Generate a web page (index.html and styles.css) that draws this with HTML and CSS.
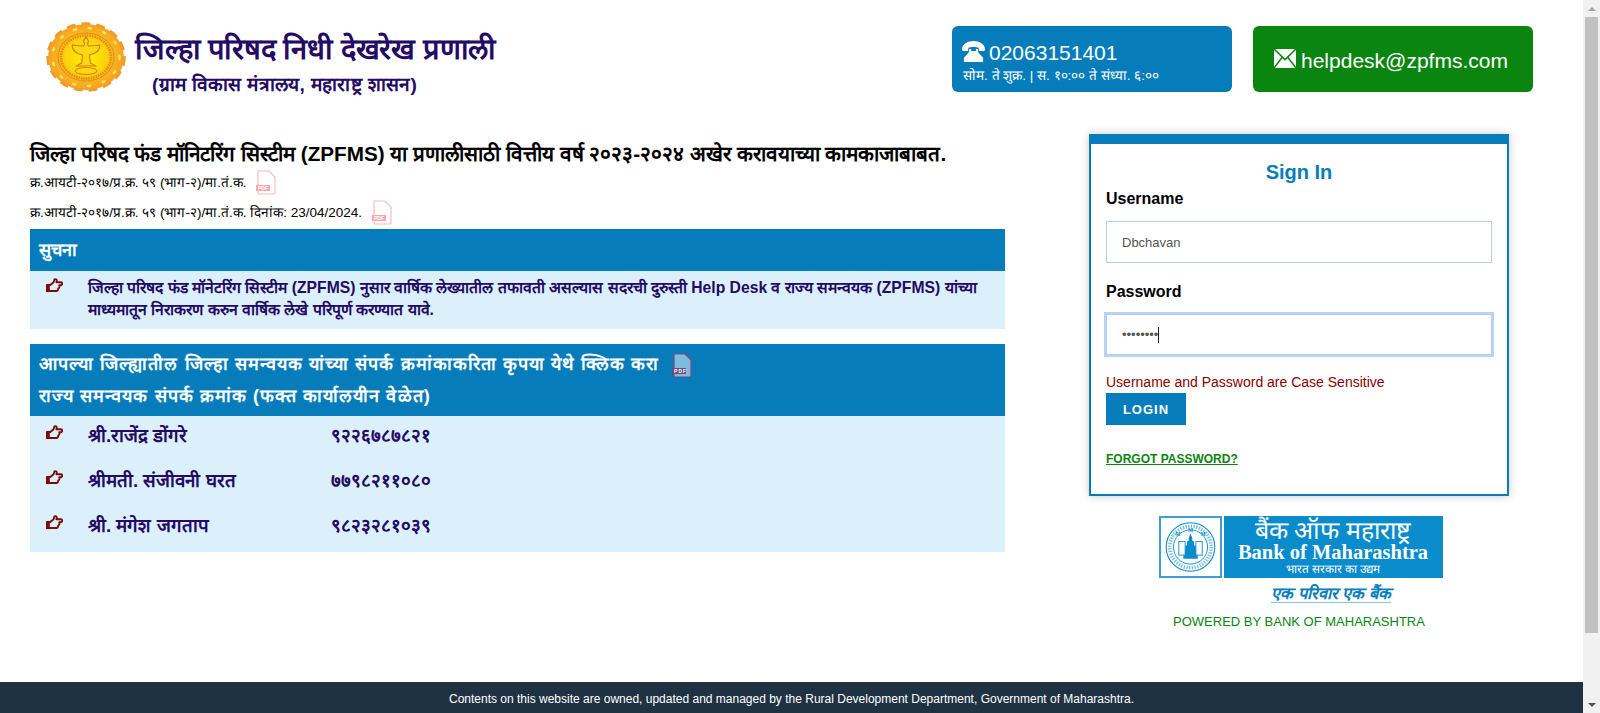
FILE: index.html
```html
<!DOCTYPE html>
<html lang="mr">

<head>
  <meta charset="UTF-8">
  <title>जिल्हा परिषद निधी देखरेख प्रणाली</title>
  <link rel="stylesheet" href="styles.css">
</head>

<body>
  <svg width="0" height="0" class="defs">
    <symbol id="hand" viewBox="0 0 18 16">
      <path d="M1 7.500h3.500L8 4.500 9 1.500c1.800-1 3 .7 2 3h4.500c2.300 0 2.300 3.200 0 3.200H14c.8 1.800 0 3.200-1 3.300.1 1.500-.7 2.800-2 2.800H4.500L1 14z" fill="none" stroke="#7a0c0c" stroke-width="2" stroke-linejoin="round"/>
      <rect x="0" y="7" width="4" height="8" fill="#7a0c0c"/>
    </symbol>
  </svg>

  <div class="page">
    <header class="top">
      <div class="brand">
        <svg class="seal" viewBox="0 0 80 70">
          <defs>
            <radialGradient id="sealfill">
              <stop offset="0" stop-color="#fff200"/>
              <stop offset=".55" stop-color="#fbd20c"/>
              <stop offset=".7" stop-color="#f9b81c"/>
              <stop offset="1" stop-color="#f5a028"/>
            </radialGradient>
          </defs>
          <ellipse cx="40" cy="35" rx="38" ry="33" fill="url(#sealfill)"/>
          <ellipse cx="40" cy="35" rx="38.500" ry="33.500" fill="none" stroke="#f09a2c" stroke-width="2.500" stroke-dasharray="9 6"/>
          <ellipse cx="40" cy="35" rx="33.500" ry="29" fill="none" stroke="#fde45a" stroke-width="2.500" stroke-dasharray="2 13" stroke-linecap="round"/>
          <ellipse cx="40" cy="35" rx="28" ry="24" fill="none" stroke="#e07f12" stroke-width=".8"/>
          <ellipse cx="40" cy="35" rx="25" ry="21.500" fill="none" stroke="#e58c14" stroke-width="2.500" stroke-dasharray="1.500 1"/>
          <path d="M40 15l2.500 4-1 3 1 2c5-1 9 0 11-1 1 5-4 9-10 10l.8 8 5 3H30.700l5-3 .8-8c-6-1-11-5-10-10 2 1 6 0 11 1l1-2-1-3z" fill="#fbd811" stroke="#d6800f" stroke-width="1.200"/>
          <ellipse cx="40" cy="49" rx="11" ry="3.500" fill="none" stroke="#d6800f" stroke-width="1"/>
        </svg>
        <div class="brand-text">
          <h1>जिल्हा परिषद निधी देखरेख प्रणाली</h1>
          <p>(ग्राम विकास मंत्रालय, महाराष्ट्र शासन)</p>
        </div>
      </div>
      <div class="contact contact-phone">
        <div class="phone-line">
          <svg class="ico-phone" viewBox="0 0 24 20" preserveAspectRatio="none">
            <path d="M0 8C0 3 6 0 12 0s12 3 12 8c0 1-1 1.500-2 1.500h-3c-1 0-1.500-.5-1.500-1.500V6.500C15 5.500 9 5.500 6.500 6.500V8c0 1-.5 1.500-1.500 1.500H2C1 9.500 0 9 0 8z" fill="#fff"/>
            <path d="M7.500 7.500h2v2h5v-2h2l.5 3.500 5 5V20H2v-4l5-5z" fill="#fff"/>
          </svg>
          <span>02063151401</span>
        </div>
        <div class="phone-hours">सोम. ते शुक्र. | स. १०:०० ते संध्या. ६:००</div>
      </div>
      <div class="contact contact-mail">
        <svg class="ico-mail" viewBox="0 0 22 18" preserveAspectRatio="none">
          <rect width="22" height="18" fill="#fff"/>
          <path d="M0 0l11 10L22 0M0 18l8-10M22 18L14 8" fill="none" stroke="#0a8510" stroke-width="1.500"/>
        </svg>
        <span>helpdesk@zpfms.com</span>
      </div>
    </header>

    <main class="content">
      <section class="notes">
        <h2>जिल्हा परिषद फंड मॉनिटरिंग सिस्टीम (ZPFMS) या प्रणालीसाठी वित्तीय वर्ष २०२३-२०२४ अखेर करावयाच्या कामकाजाबाबत.</h2>
        <p class="ref">क्र.आयटी-२०१७/प्र.क्र. ५९ (भाग-२)/मा.तं.क. <svg class="pdf" viewBox="0 0 20 25"><path class="pdf-page" d="M2 1h11l6 6v16a1 1 0 0 1-1 1H3a1 1 0 0 1-1-1z"/><rect class="pdf-tag" y="15" width="14" height="6"/><text x="2" y="20" class="pdf-word">PDF</text></svg></p>
        <p class="ref">क्र.आयटी-२०१७/प्र.क्र. ५९ (भाग-२)/मा.तं.क. दिनांक: 23/04/2024. <svg class="pdf" viewBox="0 0 20 25"><path class="pdf-page" d="M2 1h11l6 6v16a1 1 0 0 1-1 1H3a1 1 0 0 1-1-1z"/><rect class="pdf-tag" y="15" width="14" height="6"/><text x="2" y="20" class="pdf-word">PDF</text></svg></p>

        <div class="band">
          <h3>सुचना</h3>
        </div>
        <div class="panel panel-notice">
          <svg class="hand"><use href="#hand"/></svg>
          <p>जिल्हा परिषद फंड मॉनेटरिंग सिस्टीम (ZPFMS) नुसार वार्षिक लेख्यातील तफावती असल्यास सदरची दुरुस्ती Help Desk व राज्य समन्वयक (ZPFMS) यांच्या माध्यमातून निराकरण करुन वार्षिक लेखे परिपूर्ण करण्यात यावे.</p>
        </div>

        <div class="band band-two">
          <h3>आपल्या जिल्ह्यातील जिल्हा समन्वयक यांच्या संपर्क क्रमांकाकरिता कृपया येथे क्लिक करा <svg class="pdf pdf-dark" viewBox="0 0 20 25"><path class="pdf-page" d="M2 1h11l6 6v16a1 1 0 0 1-1 1H3a1 1 0 0 1-1-1z"/><rect class="pdf-tag" y="15" width="14" height="6"/><text x="2" y="20" class="pdf-word">PDF</text></svg></h3>
          <h3>राज्य समन्वयक संपर्क क्रमांक (फक्त कार्यालयीन वेळेत)</h3>
        </div>
        <div class="panel panel-list">
          <div class="person"><svg class="hand"><use href="#hand"/></svg><span class="name">श्री.राजेंद्र डोंगरे</span><span>९२२६७८७८२१</span></div>
          <div class="person"><svg class="hand"><use href="#hand"/></svg><span class="name">श्रीमती. संजीवनी घरत</span><span>७७९८२११०८०</span></div>
          <div class="person"><svg class="hand"><use href="#hand"/></svg><span class="name">श्री. मंगेश जगताप</span><span>९८२३२८१०३९</span></div>
        </div>
      </section>

      <aside class="side">
        <form class="login">
          <h2>Sign In</h2>
          <label for="user">Username</label>
          <input id="user" type="text" value="Dbchavan">
          <label for="pass">Password</label>
          <div class="input-focus"><span class="dots">••••••••</span><i class="caret"></i></div>
          <p class="case">Username and Password are Case Sensitive</p>
          <button type="button">LOGIN</button>
          <a href="#" class="forgot">FORGOT PASSWORD?</a>
        </form>

        <div class="bank">
          <div class="bank-row">
            <div class="bank-seal">
              <svg viewBox="0 0 60 60">
                <circle cx="30" cy="30" r="27" fill="none" stroke="#0a8ccc" stroke-width="1.200"/>
                <circle cx="30" cy="30" r="19" fill="none" stroke="#0a8ccc" stroke-width="1"/>
                <circle cx="30" cy="30" r="23" fill="none" stroke="#0a8ccc" stroke-width="4" stroke-dasharray="1.500 1.500" opacity=".55"/>
                <path d="M30 15l2 5v3l2 1v4l2 1v5l2 1v8H22v-8l2-1v-5l2-1v-4l2-1v-3z" fill="#0a8ccc"/>
                <rect x="17" y="24" width="7" height="15" fill="#fff" stroke="#0a8ccc"/>
                <rect x="36" y="24" width="7" height="15" fill="#fff" stroke="#0a8ccc"/>
                <text x="30" y="13" class="seal-m">M</text>
                <text x="16" y="18" class="seal-m">M</text>
                <text x="44" y="18" class="seal-m">M</text>
              </svg>
            </div>
            <div class="bank-name">
              <span class="bank-mr">बैंक ऑफ महाराष्ट्र</span>
              <span class="bank-en">Bank of Maharashtra</span>
              <span class="bank-sub">भारत सरकार का उद्यम</span>
            </div>
          </div>
          <div class="bank-tag">एक परिवार एक बैंक</div>
          <p class="powered">POWERED BY BANK OF MAHARASHTRA</p>
        </div>
      </aside>
    </main>

    <footer class="foot">Contents on this website are owned, updated and managed by the Rural Development Department, Government of Maharashtra.</footer>
  </div>

  <div class="bar">
    <i class="arrow arrow-up"></i>
    <div class="thumb"></div>
    <i class="arrow arrow-down"></i>
  </div>
</body>

</html>
```

FILE: styles.css
```css
* {
  box-sizing: border-box;
}

html,
body {
  height: 100%;
}

body {
  margin: 0;
  display: flex;
  overflow: hidden;
  font-family: "Liberation Sans", Arial, sans-serif;
  background: #fff;
  color: #000;
}

.defs {
  position: absolute;
}

.page {
  flex: 1;
  min-width: 0;
  display: flex;
  flex-direction: column;
}

/* header */
.top {
  display: flex;
  align-items: flex-start;
  height: 134px;
  padding-top: 26px;
}

.brand {
  display: flex;
  width: 952px;
  padding-left: 46px;
}

.seal {
  width: 80px;
  height: 70px;
  margin-top: -4px;
}

.brand-text {
  margin-left: 9px;
}

.brand-text h1 {
  margin: 0;
  font-size: 29px;
  letter-spacing: -.2px;
  line-height: 46px;
  font-weight: bold;
  color: #240b63;
}

.brand-text p {
  margin: 1px 0 0 17px;
  font-size: 19.100px;
  letter-spacing: .3px;
  line-height: 24px;
  font-weight: bold;
  color: #240b63;
}

.contact {
  height: 66px;
  width: 280px;
  border-radius: 6px;
  color: #fff;
}

.contact-phone {
  background: #067dba;
  padding: 14px 0 0 10px;
}

.phone-line {
  display: flex;
  align-items: center;
  height: 26px;
  font-size: 21px;
  line-height: 26px;
}

.ico-phone {
  width: 23px;
  height: 21px;
  margin: -3px 4px 0 0;
}

.phone-hours {
  margin-left: 1px;
  font-size: 13.500px;
  line-height: 20px;
}

.contact-mail {
  display: flex;
  align-items: center;
  margin-left: 21px;
  padding: 4px 0 0 21px;
  background: #0a8510;
  font-size: 21px;
}

.ico-mail {
  width: 22px;
  height: 19px;
  margin: -6px 5px 0 0;
}

/* main area */
.content {
  flex: 1;
  display: flex;
  align-items: flex-start;
}

.notes {
  width: 975px;
  margin-left: 30px;
}

.notes > h2 {
  margin: 0;
  padding-top: 7px;
  font-size: 20.700px;
  line-height: 26px;
  white-space: nowrap;
}

.ref {
  display: flex;
  align-items: center;
  margin: 0;
  height: 30px;
  font-size: 13.500px;
  white-space: pre;
}

.ref + .band {
  margin-top: 2px;
}

.pdf {
  --edge: #f8bcbc;
  --tag: #f6a8a8;
  width: 20px;
  height: 25px;
  margin-left: 6px;
  color: #fff;
}

.pdf-page {
  fill: currentColor;
  stroke: var(--edge);
  stroke-width: 1.200;
}

.pdf-tag {
  fill: var(--tag);
}

.pdf-word {
  font: bold 5px "Liberation Sans", sans-serif;
  fill: #fff;
}

.pdf-dark {
  --edge: #7a4a78;
  --tag: #6b4a7c;
  color: #7fbbe0;
  vertical-align: middle;
}

.band {
  background: #067dba;
  color: #fff;
  padding: 0 9px;
}

.band h3 {
  margin: 0;
  font-size: 18px;
  font-weight: bold;
}

.band > h3:only-child {
  line-height: 42px;
}

.band-two {
  height: 72px;
  margin-top: 15px;
  padding-top: 4px;
}

.band-two h3 {
  height: 32px;
  line-height: 32px;
  letter-spacing: 1.050px;
}

.panel {
  background: #dcf0fb;
  color: #240b63;
}

.hand {
  flex: none;
  width: 17px;
  height: 15px;
  margin: 9px 25px 0 16px;
}

.panel-notice {
  display: flex;
  height: 58px;
}

.panel-notice .hand {
  margin-top: 7px;
}

.panel-notice p {
  margin: 6px 15px 0 0;
  font-size: 15.700px;
  line-height: 22px;
  font-weight: bold;
}

.panel-list {
  height: 136px;
  padding-top: 3px;
}

.person {
  display: flex;
  height: 45px;
  font-size: 18.700px;
  line-height: 34px;
  font-weight: bold;
}

.person .hand {
  margin-top: 6px;
}

.name {
  width: 243px;
}

/* login */
.side {
  width: 420px;
  margin-left: 84px;
}

.login {
  display: flex;
  flex-direction: column;
  align-items: flex-start;
  height: 362px;
  padding: 0 15px;
  border: 2px solid #067dba;
  border-top-width: 10px;
  box-shadow: 0 0 8px rgba(90, 70, 70, .3);
}

.login h2 {
  align-self: center;
  margin: 14px 0 3px;
  font-size: 20px;
  line-height: 28px;
  color: #067dba;
}

.login label {
  font-size: 16px;
  line-height: 20px;
  font-weight: bold;
}

#user {
  width: 386px;
  height: 42px;
  margin: 12px 0 19px;
  padding: 0 15px;
  border: 1px solid #b9cde4;
  font: 13px "Liberation Sans", Arial, sans-serif;
  color: #555;
  outline: none;
}

.input-focus {
  display: flex;
  align-items: center;
  width: 386px;
  height: 41px;
  margin-top: 12px;
  padding: 0 15px;
  border: 1px solid #b9cde4;
  box-shadow: 0 0 0 2px #b5d5fb;
}

.dots {
  font-size: 13px;
  color: #555;
}

.caret {
  width: 1px;
  height: 16px;
  background: #222;
}

.case {
  margin: 17px 0 0;
  font-size: 14px;
  line-height: 20px;
  color: #8b0000;
}

.login button {
  width: 80px;
  height: 32px;
  margin-top: 1px;
  padding: 0;
  border: none;
  background: #067dba;
  color: #fff;
  font: bold 13px "Liberation Sans", Arial, sans-serif;
  letter-spacing: 1px;
}

.forgot {
  margin-top: 26px;
  font-size: 12px;
  line-height: 16px;
  font-weight: bold;
  color: #0a8510;
}

/* bank logo */
.bank {
  display: flex;
  flex-direction: column;
  align-items: center;
  margin-top: 20px;
}

.bank-row {
  display: flex;
  gap: 2px;
  height: 62px;
  margin-left: 3px;
}

.bank-seal {
  width: 63px;
  padding: 2px;
  background: #fff;
  border: 2px solid #3d9ed6;
}

.bank-seal svg {
  display: block;
  width: 55px;
  height: 54px;
}

.seal-m {
  font: bold 6px "Liberation Serif", serif;
  fill: #0a8ccc;
  text-anchor: middle;
}

.bank-name {
  display: flex;
  flex-direction: column;
  align-items: center;
  width: 219px;
  padding-top: 1px;
  background: #0a8ccc;
  color: #fff;
}

.bank-mr {
  font-size: 25px;
  line-height: 26px;
  white-space: nowrap;
}

.bank-en {
  font-family: "Liberation Serif", serif;
  font-size: 20.500px;
  font-weight: bold;
  line-height: 18px;
  white-space: nowrap;
}

.bank-sub {
  font-size: 11.800px;
  line-height: 16px;
  white-space: nowrap;
}

.bank-tag {
  margin: 6px 0 0 64px;
  font-size: 16.500px;
  line-height: 18px;
  font-weight: bold;
  font-style: italic;
  color: #0a7fbb;
  border-bottom: 1px solid #8cc4e2;
}

.powered {
  margin: 10px 0 0;
  font-size: 13px;
  line-height: 18px;
  color: #0a8510;
}

.foot {
  height: 31px;
  background: #1f3244;
  color: #fff;
  font-size: 12px;
  line-height: 34px;
  text-align: center;
}

/* scrollbar */
.bar {
  flex: none;
  display: flex;
  flex-direction: column;
  width: 17px;
  background: #f1f1f1;
}

.arrow {
  flex: none;
  height: 17px;
  display: flex;
  align-items: center;
  justify-content: center;
}

.arrow::before {
  content: "";
  border-left: 4px solid transparent;
  border-right: 4px solid transparent;
}

.arrow-up::before {
  border-bottom: 4px solid #a3a3a3;
}

.arrow-down::before {
  border-top: 4px solid #505050;
}

.thumb {
  flex: 1;
  margin: 0 2px 63px;
  background: #c1c1c1;
}
```
